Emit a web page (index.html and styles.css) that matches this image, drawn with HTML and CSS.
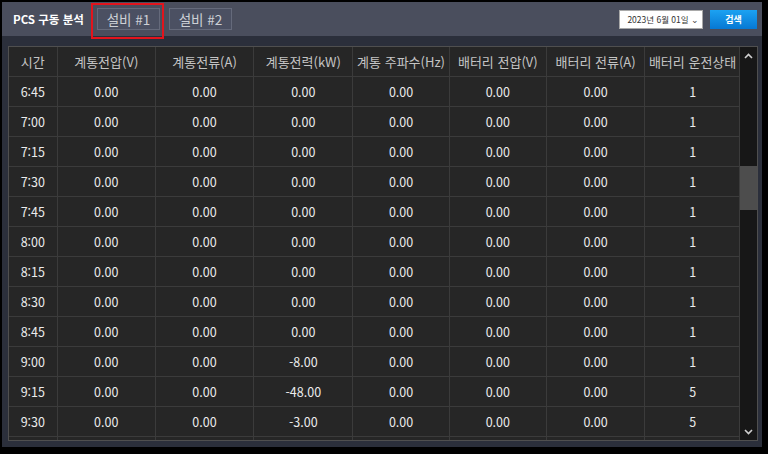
FILE: index.html
```html
<!DOCTYPE html>
<html lang="ko">
<head>
<meta charset="utf-8">
<link rel="stylesheet" href="styles.css">
</head>
<body>
<div class="panel">
  <div class="topbar">
    <div class="title">PCS 구동 분석</div>
    <div class="tabs">
      <div class="tab tab-active">설비 #1</div>
      <div class="tab">설비 #2</div>
      <div class="highlight"></div>
    </div>
    <div class="spacer"></div>
    <div class="datesel">2023년 6월 01일 <span class="chev">⌄</span></div>
    <div class="btn">검색</div>
  </div>
  <div class="content">
    <div class="gridbox">
      <div class="tablewrap">
        <table class="grid">
          <colgroup>
            <col class="c1"><col class="c2"><col class="c2"><col class="c4"><col class="c5"><col class="c6"><col class="c2"><col class="c8">
          </colgroup>
          <thead>
            <tr><th>시간</th><th>계통전압(V)</th><th>계통전류(A)</th><th>계통전력(kW)</th><th>계통 주파수(Hz)</th><th>배터리 전압(V)</th><th>배터리 전류(A)</th><th>배터리 운전상태</th></tr>
          </thead>
          <tbody>
            <tr><td>6:45</td><td>0.00</td><td>0.00</td><td>0.00</td><td>0.00</td><td>0.00</td><td>0.00</td><td>1</td></tr>
            <tr><td>7:00</td><td>0.00</td><td>0.00</td><td>0.00</td><td>0.00</td><td>0.00</td><td>0.00</td><td>1</td></tr>
            <tr><td>7:15</td><td>0.00</td><td>0.00</td><td>0.00</td><td>0.00</td><td>0.00</td><td>0.00</td><td>1</td></tr>
            <tr><td>7:30</td><td>0.00</td><td>0.00</td><td>0.00</td><td>0.00</td><td>0.00</td><td>0.00</td><td>1</td></tr>
            <tr><td>7:45</td><td>0.00</td><td>0.00</td><td>0.00</td><td>0.00</td><td>0.00</td><td>0.00</td><td>1</td></tr>
            <tr><td>8:00</td><td>0.00</td><td>0.00</td><td>0.00</td><td>0.00</td><td>0.00</td><td>0.00</td><td>1</td></tr>
            <tr><td>8:15</td><td>0.00</td><td>0.00</td><td>0.00</td><td>0.00</td><td>0.00</td><td>0.00</td><td>1</td></tr>
            <tr><td>8:30</td><td>0.00</td><td>0.00</td><td>0.00</td><td>0.00</td><td>0.00</td><td>0.00</td><td>1</td></tr>
            <tr><td>8:45</td><td>0.00</td><td>0.00</td><td>0.00</td><td>0.00</td><td>0.00</td><td>0.00</td><td>1</td></tr>
            <tr><td>9:00</td><td>0.00</td><td>0.00</td><td>-8.00</td><td>0.00</td><td>0.00</td><td>0.00</td><td>1</td></tr>
            <tr><td>9:15</td><td>0.00</td><td>0.00</td><td>-48.00</td><td>0.00</td><td>0.00</td><td>0.00</td><td>5</td></tr>
            <tr><td>9:30</td><td>0.00</td><td>0.00</td><td>-3.00</td><td>0.00</td><td>0.00</td><td>0.00</td><td>5</td></tr>
            <tr><td></td><td></td><td></td><td></td><td></td><td></td><td></td><td></td></tr>
          </tbody>
        </table>
      </div>
      <div class="scrollbar">
        <div class="arrow">
          <svg width="9" height="6" viewBox="0 0 9 6"><path d="M1 5 L4.5 1.5 L8 5" fill="none" stroke="#d0d0d0" stroke-width="1.6"/></svg>
        </div>
        <div class="thumb"></div>
        <div class="track-fill"></div>
        <div class="arrow">
          <svg width="9" height="6" viewBox="0 0 9 6"><path d="M1 1 L4.5 4.5 L8 1" fill="none" stroke="#d0d0d0" stroke-width="1.6"/></svg>
        </div>
      </div>
    </div>
  </div>
</div>
</body>
</html>
```
FILE: styles.css
```css
html, body {
  margin: 0;
  padding: 0;
  background: #000;
  width: 768px;
  height: 454px;
  overflow: hidden;
  font-family: "Noto Sans CJK KR", "Noto Sans", "Liberation Sans", sans-serif;
}
body {
  padding: 2px 0 0 2px;
  box-sizing: border-box;
}
.panel {
  width: 760px;
  height: 445px;
  background: #2b2f3b;
  display: flex;
  flex-direction: column;
}
.topbar {
  height: 34px;
  background: #4a4e5d;
  display: flex;
  align-items: center;
  padding: 0 5px 0 11px;
  flex: none;
}
.title {
  color: #ffffff;
  font-size: 11.5px;
  font-weight: bold;
  width: 84px;
}
.tabs {
  position: relative;
  display: flex;
  gap: 9px;
  height: 34px;
  align-items: center;
}
.tab {
  width: 61px;
  height: 20px;
  border: 1px solid #656a7b;
  background: #4b5062;
  color: #cdd0d6;
  font-size: 13.5px;
  line-height: 20px;
  text-align: center;
  box-sizing: content-box;
}
.highlight {
  position: absolute;
  left: -6px;
  top: 1px;
  width: 69px;
  height: 32px;
  border: 2px solid #e3141c;
}
.spacer { flex: 1; }
.datesel {
  width: 79px;
  height: 17px;
  background: #fff;
  border: 1px solid #a9a9a9;
  color: #333;
  font-size: 8.5px;
  line-height: 17px;
  text-align: right;
  padding-right: 3px;
  box-sizing: content-box;
  margin-right: 7px;
  white-space: nowrap;
}
.chev {
  font-size: 9px;
  color: #444;
}
.btn {
  width: 47px;
  height: 19px;
  background: linear-gradient(#1ca2f2, #0678d3);
  color: #fff;
  font-size: 9px;
  font-weight: bold;
  line-height: 19px;
  text-align: center;
}
.content {
  flex: 1;
  padding: 10px 4px 6px 6px;
  display: flex;
  box-sizing: border-box;
}
.gridbox {
  width: 750px;
  height: 395px;
  border: 1px solid #4f4f4f;
  box-sizing: border-box;
  background: #262626;
  display: flex;
}
.tablewrap {
  width: 731px;
  overflow: hidden;
}
.grid {
  border-collapse: collapse;
  table-layout: fixed;
  width: 731px;
}
.c1 { width: 48px; }
.c2 { width: 98px; }
.c4 { width: 99px; }
.c5 { width: 96px; }
.c6 { width: 97px; }
.c8 { width: 95px; }
.grid th, .grid td {
  height: 29px;
  padding: 0;
  border-right: 1px solid #3b3b3b;
  border-bottom: 1px solid #3b3b3b;
  text-align: center;
  white-space: nowrap;
  overflow: hidden;
}
.grid th {
  color: #c4c4c4;
  font-weight: normal;
  font-size: 13px;
}
.grid td {
  color: #ececec;
  font-size: 12.5px;
}
.grid tr > :last-child { border-right: none; }
.scrollbar {
  width: 17px;
  background: #171717;
  display: flex;
  flex-direction: column;
  border-left: 1px solid #3b3b3b;
}
.arrow {
  height: 17px;
  display: flex;
  align-items: center;
  justify-content: center;
  flex: none;
}
.thumb {
  margin-top: 102px;
  height: 44px;
  background: #4d4d4d;
  flex: none;
}
.track-fill { flex: 1; }
```
